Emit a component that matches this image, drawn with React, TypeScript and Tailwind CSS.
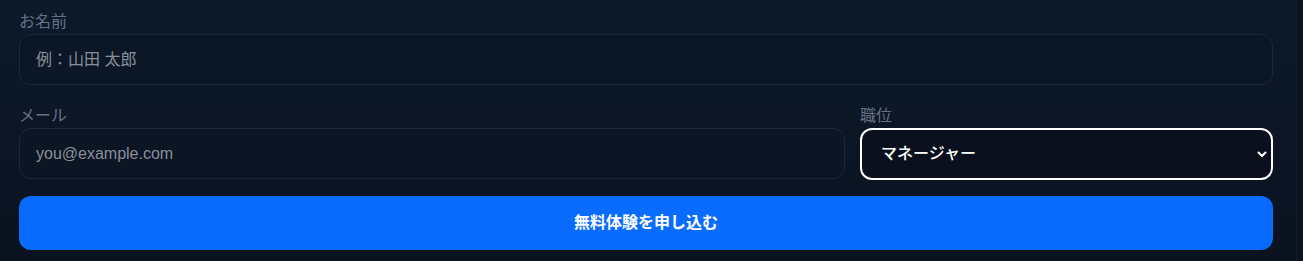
import React, { useState } from "react";

const font = { fontFamily: '"Liberation Sans", "Noto Sans CJK JP", sans-serif' };

export default function App() {
  const [name, setName] = useState("");
  const [email, setEmail] = useState("");
  const [role, setRole] = useState("manager");

  return (
    <div style={font} className="w-full h-[261px] flex bg-[#0b1220]">
      <div className="w-[1297px] h-full bg-gradient-to-b from-[#0c1a2b] to-[#0b1220] pl-[19px] pr-[23px] pt-[10px] border-r border-[#111a28]">
        <form className="flex flex-col" onSubmit={(e) => e.preventDefault()}>
          <label className="text-[16px] leading-[24px] text-[#667085]">お名前</label>
          <input
            value={name}
            onChange={(e) => setName(e.target.value)}
            placeholder="例：山田 太郎"
            className="h-[51px] w-full rounded-[12px] border border-[#1c2738] bg-[#0b1727] px-[16px] text-[16px] text-white placeholder:text-[#8a8f98] outline-none"
          />

          <div className="flex gap-[15px] mt-[19px]">
            <div className="flex-[2] min-w-0 flex flex-col">
              <label className="text-[16px] leading-[24px] text-[#667085]">メール</label>
              <input
                value={email}
                onChange={(e) => setEmail(e.target.value)}
                placeholder="you@example.com"
                className="h-[51px] w-full rounded-[12px] border border-[#1c2738] bg-[#0b1524] px-[16px] text-[16px] text-white placeholder:text-[#8a8f98] outline-none"
              />
            </div>
            <div className="flex-1 min-w-0 flex flex-col">
              <label className="text-[16px] leading-[24px] text-[#667085]">職位</label>
              <div className="relative">
                <select
                  value={role}
                  onChange={(e) => setRole(e.target.value)}
                  className="appearance-none h-[52px] w-full rounded-[12px] border-2 border-white bg-[#0a101d] pl-[19px] pr-10 text-[16px] font-medium text-white outline-none"
                >
                  <option value="staff">一般社員</option>
                  <option value="manager">マネージャー</option>
                  <option value="exec">役員</option>
                </select>
                <svg
                  className="pointer-events-none absolute right-[5px] top-1/2 -translate-y-1/2"
                  width="12"
                  height="12"
                  viewBox="0 0 12 12"
                  fill="none"
                >
                  <path d="M2.5 4.5 6 8l3.5-3.5" stroke="white" strokeWidth="2" strokeLinecap="round" strokeLinejoin="round" />
                </svg>
              </div>
            </div>
          </div>

          <button
            type="submit"
            className="mt-[16px] h-[54px] w-full rounded-[12px] bg-[#0a6cff] text-[16px] font-bold text-white"
          >
            無料体験を申し込む
          </button>
        </form>
      </div>
    </div>
  );
}
